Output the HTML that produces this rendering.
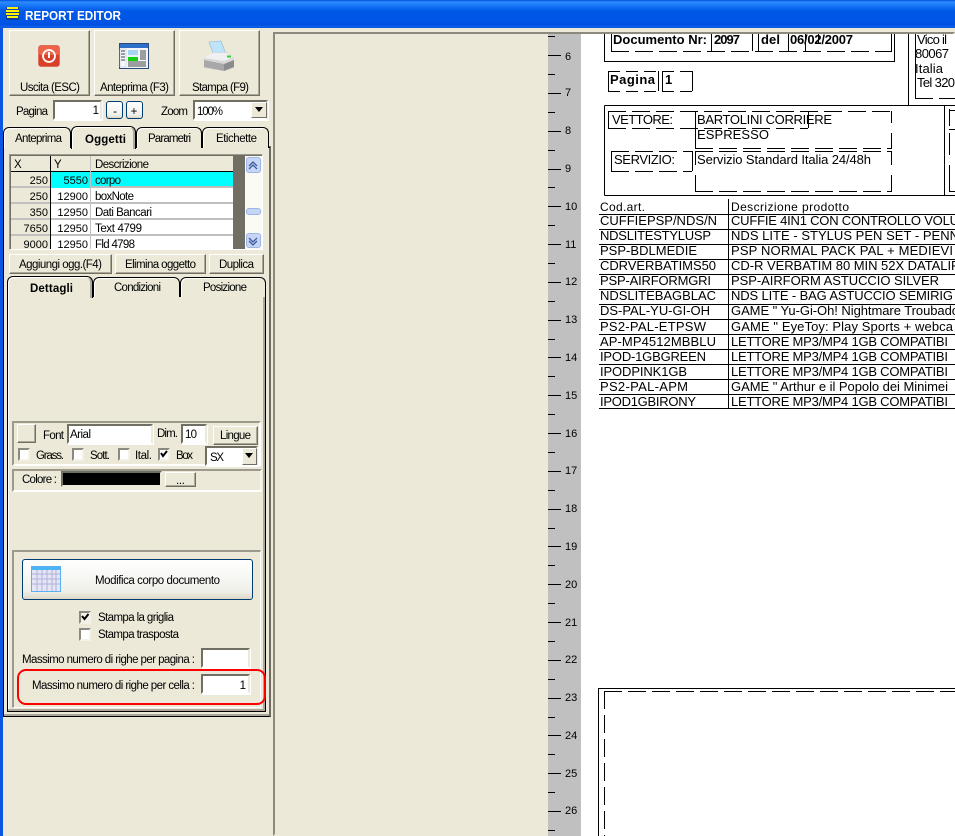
<!DOCTYPE html>
<html><head><meta charset="utf-8"><style>
html,body{margin:0;padding:0;width:955px;height:836px;overflow:hidden;background:#ECE9D8}
div{position:absolute;box-sizing:border-box}
.b{background:#ECE9D8;border:1px solid;border-color:#fff #716F64 #716F64 #fff;box-shadow:inset -1px -1px #ACA899}
.i{background:#fff;border:2px solid;border-color:#716F64 #ECE9D8 #fff #716F64;box-shadow:1px 1px #fff}
.x{background:linear-gradient(#fff,#F0F0EA 80%,#DCD8C8);border:1px solid #003C74;border-radius:3px}
.c{background:#fff;border:2px solid;border-color:#8C8A7E #F4F2E8 #F4F2E8 #8C8A7E;width:12px;height:13px}
.tab{background:#ECE9D8;border:1px solid #000;border-bottom:0;border-radius:6px 6px 0 0;box-shadow:inset 1px 1px #fff}
.g{border:2px solid;border-color:#9C9A8C #fff #fff #9C9A8C;background:#ECE9D8}
.dd{background:#ECE9D8;border:1px solid;border-color:#fff #716F64 #716F64 #fff}
.r{left:11px;width:222px;height:16px;background:#fff;border-bottom:2px solid #C0C0C0}
.h{left:11px;width:39px;height:16px;background:#ECE9D8;border-bottom:2px solid #C0C0C0}
text{font-family:"Liberation Sans",Arial,sans-serif;font-size:11.5px;fill:#000}
.n text{font-size:11px}
.d text{font-size:13px}
.bd{font-weight:bold}
</style></head><body>
<div style="left:0;top:0;width:955px;height:28px;background:linear-gradient(#0050DC 0,#2E8BFF 2px,#1A7BFA 5px,#0058E6 11px,#0055E5 22px,#0050E0 25px,#1466F0 27px,#0046C8 28px)"></div>
<div style="left:0;top:28px;width:3px;height:808px;background:#0A56E4"></div>

<!-- outer panel frame -->
<div style="left:3px;top:146px;width:268px;height:571px;background:#ECE9D8;border:1px solid #000;border-top:0;border-right:2px solid #6E6C60;box-shadow:inset 0 -2px #A8A698"></div>
<div style="left:3px;top:147px;width:267px;height:1px;background:#000"></div>

<!-- top buttons -->
<div class="b" style="left:9px;top:30px;width:81px;height:66px"></div>
<div class="b" style="left:94px;top:30px;width:81px;height:66px"></div>
<div class="b" style="left:179px;top:30px;width:81px;height:66px"></div>

<div class="i" style="left:53px;top:100px;width:49px;height:20px"></div>
<div class="x" style="left:106px;top:101px;width:17px;height:18px"></div>
<div class="x" style="left:126px;top:101px;width:17px;height:18px"></div>
<div class="i" style="left:193px;top:100px;width:75px;height:20px"></div>
<div class="dd" style="left:251px;top:102px;width:16px;height:16px"></div>

<!-- tabs 1 -->
<div class="tab" style="left:3px;top:127px;width:68px;height:21px"></div>
<div class="tab" style="left:136px;top:127px;width:66px;height:21px"></div>
<div class="tab" style="left:202px;top:127px;width:67px;height:21px"></div>
<div class="tab" style="left:71px;top:126px;width:65px;height:23px;border-color:#000;box-shadow:inset 1px 1px #fff,inset -2px 0 #ACA899"></div>

<!-- grid -->
<div style="left:9px;top:154px;width:254px;height:96px;background:#716F64;border:1px solid;border-color:#9C9A8C #fff #fff #9C9A8C"></div>
<div style="left:11px;top:156px;width:222px;height:16px;background:#ECE9D8;border-bottom:1px solid #000"></div>
<div class="r" style="top:172px;background:#0ff"></div><div class="h" style="top:172px"></div>
<div class="r" style="top:188px"></div><div class="h" style="top:188px"></div>
<div class="r" style="top:204px"></div><div class="h" style="top:204px"></div>
<div class="r" style="top:220px"></div><div class="h" style="top:220px"></div>
<div class="r" style="top:236px;height:13px;border:0"></div><div class="h" style="top:236px;height:13px;border:0"></div>
<div style="left:50px;top:156px;width:1px;height:93px;background:#000"></div>
<div style="left:51px;top:172px;width:39px;height:16px;background:#0ff"></div>
<div style="left:90px;top:156px;width:1px;height:93px;background:#C0C0C0"></div>
<div style="left:245px;top:156px;width:17px;height:93px;background:#FBFBF6"></div>
<div class="x" style="left:246px;top:157px;width:15px;height:16px;border-color:#9DB4E8;background:#C8D6F6"></div>
<div class="x" style="left:246px;top:208px;width:15px;height:7px;border-color:#9DB4E8;background:#C8D6F6"></div>
<div class="x" style="left:246px;top:233px;width:15px;height:15px;border-color:#9DB4E8;background:#C8D6F6"></div>

<div class="b" style="left:9px;top:254px;width:103px;height:20px"></div>
<div class="b" style="left:115px;top:254px;width:91px;height:20px"></div>
<div class="b" style="left:209px;top:254px;width:55px;height:20px"></div>

<!-- inner panel -->
<div style="left:7px;top:296px;width:259px;height:416px;background:#ECE9D8;border:1px solid #000;border-top:0;border-right:1px solid #000;box-shadow:inset -2px -2px #ACA899,inset 1px 0 #fff"></div>
<div style="left:7px;top:296px;width:259px;height:1px;background:#000"></div>
<div class="tab" style="left:93px;top:277px;width:87px;height:20px"></div>
<div class="tab" style="left:180px;top:277px;width:86px;height:20px"></div>
<div class="tab" style="left:7px;top:276px;width:86px;height:22px;box-shadow:inset 1px 1px #fff,inset -2px 0 #ACA899"></div>

<!-- font group -->
<div class="g" style="left:12px;top:421px;width:249px;height:45px"></div>
<div class="g" style="left:12px;top:469px;width:250px;height:23px;border-color:#9C9A8C #F8F6EC #fff #9C9A8C"></div>
<div class="b" style="left:17px;top:424px;width:19px;height:19px"></div>
<div class="i" style="left:67px;top:424px;width:86px;height:20px"></div>
<div class="i" style="left:181px;top:424px;width:26px;height:20px"></div>
<div class="b" style="left:213px;top:426px;width:45px;height:19px"></div>
<div class="c" style="left:18px;top:448px"></div>
<div class="c" style="left:72px;top:448px"></div>
<div class="c" style="left:118px;top:448px"></div>
<div class="c" style="left:158px;top:448px"></div>
<div class="i" style="left:205px;top:446px;width:53px;height:20px"></div>
<div class="dd" style="left:242px;top:448px;width:15px;height:17px"></div>
<div style="left:61px;top:471px;width:101px;height:16px;background:#000;border:2px solid;border-color:#716F64 #ECE9D8 #ECE9D8 #716F64"></div>
<div class="b" style="left:165px;top:472px;width:31px;height:15px"></div>

<!-- lower group -->
<div style="left:12px;top:550px;width:249px;height:158px;border-top:2px solid #9C9A8C;border-left:2px solid #9C9A8C;border-right:1px solid #fff;border-bottom:1px solid #fff"></div>
<div class="x" style="left:22px;top:559px;width:231px;height:41px"></div>
<div class="c" style="left:79px;top:611px;background:#F4F2E8"></div>
<div class="c" style="left:79px;top:628px;background:#fff"></div>
<div class="i" style="left:201px;top:648px;width:49px;height:20px"></div>
<div class="i" style="left:201px;top:674px;width:49px;height:20px"></div>
<div style="left:17px;top:669px;width:249px;height:36px;border:2px solid #F00;border-radius:9px"></div>

<!-- main -->
<div style="left:273px;top:32px;width:682px;height:804px;background:#ECE9D8;border:2px solid;border-color:#8C8A7E transparent transparent #8C8A7E"></div>
<div style="left:548px;top:34px;width:33px;height:802px;background:#C0C0C0"></div>
<div style="left:581px;top:34px;width:374px;height:802px;background:#fff"></div>

<!-- vector overlay -->
<svg width="955" height="836" viewBox="0 0 955 836" style="position:absolute;left:0;top:0">
<!-- title icon -->
<rect x="6" y="7" width="13" height="13" fill="#1A2A60" opacity=".55"/>
<g fill="#FFF200"><rect x="7" y="7" width="11" height="2"/><rect x="6" y="10" width="13" height="2"/><rect x="6" y="13" width="13" height="2"/><rect x="7" y="16" width="11" height="2"/></g>
<text x="25" y="20" textLength="96" lengthAdjust="spacingAndGlyphs" class="bd" style="font-size:13px;fill:#fff">REPORT EDITOR</text>

<!-- exit icon -->
<rect x="38" y="45" width="22" height="22" rx="3" fill="#D8402A" stroke="#F0E8E0" stroke-width=".6"/>
<rect x="39" y="46" width="20" height="9" rx="2" fill="#EE6448"/>
<circle cx="49" cy="56" r="6" fill="none" stroke="#fff" stroke-width="1.8"/>
<path d="M49 52v6" stroke="#fff" stroke-width="2"/>
<!-- preview icon -->
<rect x="119.500" y="43.500" width="29" height="25" fill="#F4F6FA" stroke="#2A4A7A"/>
<rect x="120" y="44" width="28" height="4" fill="#2F70C8"/>
<rect x="128" y="50" width="10" height="5" fill="#A8D4F4"/><rect x="128" y="55" width="10" height="2" fill="#E8F4FC"/>
<rect x="128" y="57" width="10" height="4" fill="#10D010"/>
<path d="M121 51h4M121 54h4M121 57h4M121 60h4M128 62h18M128 64h18M128 66h18M140 51h6M140 53h6M140 55h6M140 57h6M140 59h6" stroke="#444" stroke-width="1" shape-rendering="crispEdges"/>
<rect x="120" y="49" width="6" height="18" fill="none" stroke="#B8C4D8" stroke-width=".5"/>
<!-- printer icon -->
<path d="M209 42l12-1 5 13-12 2z" fill="#BEE4FA" stroke="#9AB8C8" stroke-width=".6"/>
<path d="M204 58l8-5 14-1 8 5v11l-10 3-20-3z" fill="#D8D8D8"/>
<path d="M204 58l20 3 10-4-8-4-14 0z" fill="#F0F0F0"/>
<path d="M204 60l20 4v7l-20-4z" fill="#A8A8A8"/>
<path d="M224 64l10-4v7l-10 4z" fill="#8C8C8C"/>
<rect x="227" y="55.500" width="4" height="2" fill="#30D030"/>

<!-- +/- dd arrows -->
<path d="M255 107h8l-4 5z"/><path d="M245 453h8l-4 5z"/>

<!-- calendar icon -->
<rect x="31.500" y="566.500" width="29" height="25" fill="#E4E6F6" stroke="#5AB0F0"/>
<rect x="32" y="567" width="28" height="3" fill="#4AB4F4"/>
<path d="M32 574h28M32 579h28M32 584h28M37 570v21M42 570v21M47 570v21M52 570v21M56 570v21" stroke="#B0B2D8" shape-rendering="crispEdges"/>

<!-- checks -->
<path d="M161 453l2 3 4-5" fill="none" stroke="#000" stroke-width="2"/>
<path d="M82 616l2.500 3 4-5" fill="none" stroke="#000" stroke-width="2"/>

<!-- labels -->
<text x="20" y="91" textLength="60">Uscita (ESC)</text>
<text x="100" y="91" textLength="69">Anteprima (F3)</text>
<text x="192" y="91" textLength="57">Stampa (F9)</text>
<text x="16" y="115" textLength="32">Pagina</text>
<text x="99" y="114" text-anchor="end">1</text>
<text x="115" y="115" text-anchor="middle">-</text>
<text x="134" y="115" text-anchor="middle">+</text>
<text x="161" y="115" textLength="27">Zoom</text>
<text x="197" y="115" textLength="26">100%</text>
<text x="15" y="142" textLength="47">Anteprima</text>
<text x="85" y="143" textLength="41" class="bd">Oggetti</text>
<text x="148" y="142" textLength="43">Parametri</text>
<text x="216" y="142" textLength="41">Etichette</text>
<text x="14" y="168">X</text><text x="54" y="168">Y</text><text x="95" y="168" textLength="54">Descrizione</text>
<g text-anchor="end" class="n"><text x="48" y="184">250</text><text x="48" y="200">250</text><text x="48" y="216">350</text><text x="48" y="232">7650</text><text x="48" y="248">9000</text>
<text x="88" y="184">5550</text><text x="88" y="200">12900</text><text x="88" y="216">12950</text><text x="88" y="232">12950</text><text x="88" y="248">12950</text></g>
<text x="95" y="184" textLength="26">corpo</text><text x="95" y="200" textLength="39">boxNote</text><text x="95" y="216" textLength="57">Dati Bancari</text><text x="95" y="232" textLength="47">Text 4799</text><text x="95" y="248" textLength="40">Fld 4798</text>
<path d="M249 166l4-4 4 4M249 169l4-4 4 4M249 238l4 4 4-4M249 241l4 4 4-4" fill="none" stroke="#3A5A9A" stroke-width="1.3"/>
<text x="19" y="268" textLength="83">Aggiungi ogg.(F4)</text>
<text x="125" y="268" textLength="71">Elimina oggetto</text>
<text x="219" y="268" textLength="35">Duplica</text>
<text x="30" y="292" textLength="43" class="bd">Dettagli</text>
<text x="114" y="291" textLength="47">Condizioni</text>
<text x="203" y="291" textLength="44">Posizione</text>
<text x="43" y="439" textLength="21">Font</text>
<text x="70" y="438" textLength="21">Arial</text>
<text x="157" y="437" textLength="21">Dim.</text>
<text x="185" y="438" textLength="12">10</text>
<text x="220" y="439" textLength="31">Lingue</text>
<text x="36" y="459" textLength="28">Grass.</text>
<text x="90" y="459" textLength="20">Sott.</text>
<text x="135" y="459" textLength="17">Ital.</text>
<text x="176" y="459" textLength="17">Box</text>
<text x="210" y="461" textLength="14">SX</text>
<text x="22" y="483" textLength="35">Colore :</text>
<text x="176" y="484" textLength="9">...</text>
<text x="95" y="584" textLength="125">Modifica corpo documento</text>
<text x="98" y="621" textLength="76">Stampa la griglia</text>
<text x="98" y="638" textLength="81">Stampa trasposta</text>
<text x="22" y="663" textLength="173">Massimo numero di righe per pagina :</text>
<text x="32" y="689" textLength="163">Massimo numero di righe per cella :</text>
<text x="246" y="689" text-anchor="end">1</text>

<!-- ruler -->
<g fill="#000" shape-rendering="crispEdges">
<path stroke="#000" d="M548 36.500h7M548 55.500h13M548 74.500h7M548 93.500h13M548 112.500h7M548 131.500h13M548 150.500h7M548 169.500h13M548 187.500h7M548 206.500h13M548 225.500h7M548 244.500h13M548 263.500h7M548 282.500h13M548 301.500h7M548 320.500h13M548 339.500h7M548 357.500h13M548 376.500h7M548 395.500h13M548 414.500h7M548 433.500h13M548 452.500h7M548 471.500h13M548 490.500h7M548 509.500h13M548 528.500h7M548 546.500h13M548 565.500h7M548 584.500h13M548 603.500h7M548 622.500h13M548 641.500h7M548 660.500h13M548 679.500h7M548 698.500h13M548 717.500h7M548 735.500h13M548 754.500h7M548 773.500h13M548 792.500h7M548 811.500h13M548 830.500h7"/>
</g>
<g text-anchor="start" class="n">
<text x="565" y="60">6</text><text x="565" y="96">7</text><text x="565" y="134">8</text><text x="565" y="172">9</text>
<text x="565" y="210">10</text><text x="565" y="248">11</text><text x="565" y="285">12</text><text x="565" y="323">13</text><text x="565" y="361">14</text><text x="565" y="399">15</text><text x="565" y="437">16</text><text x="565" y="474">17</text><text x="565" y="512">18</text><text x="565" y="550">19</text><text x="565" y="588">20</text><text x="565" y="626">21</text><text x="565" y="663">22</text><text x="565" y="701">23</text><text x="565" y="739">24</text><text x="565" y="777">25</text><text x="565" y="814">26</text>
</g>

<!-- document lines -->
<g fill="none" stroke="#000" shape-rendering="crispEdges">
<path d="M604.500 34v27.500H894.500V34M908.500 34v71M604.500 105.500H955M604.500 105.500v90M604.500 195.500H955M944.500 105v90"/>
<path d="M611.500 34v17M711.500 34v17M752.500 34v17M758.500 34v17M788.500 34v17M805.500 34v17M818.500 34v10M891.500 34v17"/>
<path stroke-dasharray="18 6" d="M611 51.500H892"/>
<path d="M915.500 34v64"/><path stroke-dasharray="18 6" d="M915 98.500H955"/>
<path stroke-dasharray="12 6" d="M608 71.500H658M608 91.500H658M662 71.500H692M662 91.500H692"/>
<path d="M608.500 71v20M658.500 71v20M662.500 71v20M692.500 71v20"/>
<path d="M608.500 111v17M695.500 111v17M808.500 111v17M695.500 128v20M611.500 151v20M692.500 151v20M695.500 151v14M695.500 175v16M891.500 111v12M891.500 133v15M891.500 151v14M891.500 175v16"/>
<path stroke-dasharray="18 6" d="M608 111.500H892M608 128.500H808M695 148.500H892M611 151.500H692M611 171.500H692M695 151.500H892M695 191.500H892"/>
<path d="M949.500 109v17M949.500 133v22M949.500 165v26"/><path stroke-dasharray="12 6" d="M949 110.500H955M949 129.500H955M949 191.500H955"/>
<path d="M728.500 199v210"/>
<path d="M599 214.500H955M599 229.500H955M599 244.500H955M599 259.500H955M599 274.500H955M599 289.500H955M599 304.500H955M599 319.500H955M599 334.500H955M599 349.500H955M599 364.500H955M599 379.500H955M599 394.500H955M599 408.500H955"/>
<path d="M598.500 836V688.500H955"/>
<path stroke-dasharray="18 6" d="M604 691.500H955"/>
<path stroke-dasharray="18 6" d="M604.500 691V836"/>
</g>

<g class="d">
<text x="613" y="44" textLength="94" class="bd">Documento Nr:</text>
<text x="714" y="44" textLength="26" class="bd">2097</text>
<text x="761" y="44" textLength="19" class="bd">del</text>
<text x="790" y="44" textLength="63" class="bd">06/02/2007</text>
<text x="610" y="84" textLength="45" class="bd">Pagina</text>
<text x="665" y="84" class="bd">1</text>
<text x="917" y="44" textLength="30">Vico il</text>
<text x="915" y="58" textLength="34">80067</text>
<text x="915" y="73" textLength="28">Italia</text>
<text x="917" y="87" textLength="38">Tel 320</text>
<text x="612" y="124" textLength="61">VETTORE:</text>
<text x="697" y="124" textLength="135">BARTOLINI CORRIERE</text>
<text x="697" y="139" textLength="72">ESPRESSO</text>
<text x="614" y="164" textLength="61">SERVIZIO:</text>
<text x="697" y="164" textLength="174">Servizio Standard Italia 24/48h</text>
<text x="600" y="211" textLength="45" style="font-size:12px">Cod.art.</text>
<text x="731" y="211" textLength="118" style="font-size:12px">Descrizione prodotto</text>
<text x="600" y="225" textLength="117">CUFFIEPSP/NDS/N</text>
<text x="600" y="240" textLength="111">NDSLITESTYLUSP</text>
<text x="600" y="255" textLength="97">PSP-BDLMEDIE</text>
<text x="600" y="270" textLength="116">CDRVERBATIMS50</text>
<text x="600" y="285" textLength="111">PSP-AIRFORMGRI</text>
<text x="600" y="300" textLength="116">NDSLITEBAGBLAC</text>
<text x="600" y="315" textLength="110">DS-PAL-YU-GI-OH</text>
<text x="600" y="331" textLength="106">PS2-PAL-ETPSW</text>
<text x="600" y="346" textLength="116">AP-MP4512MBBLU</text>
<text x="600" y="361" textLength="106">IPOD-1GBGREEN</text>
<text x="600" y="376" textLength="87">IPODPINK1GB</text>
<text x="600" y="391" textLength="88">PS2-PAL-APM</text>
<text x="600" y="406" textLength="96">IPOD1GBIRONY</text>
<text x="731" y="225" textLength="228">CUFFIE 4IN1 CON CONTROLLO VOLU</text>
<text x="731" y="240" textLength="228">NDS LITE - STYLUS PEN SET - PENN</text>
<text x="731" y="255" textLength="222">PSP NORMAL PACK PAL + MEDIEVI</text>
<text x="731" y="270" textLength="228">CD-R VERBATIM 80 MIN 52X DATALIF</text>
<text x="731" y="285" textLength="208">PSP-AIRFORM ASTUCCIO SILVER</text>
<text x="731" y="300" textLength="222">NDS LITE - BAG ASTUCCIO SEMIRIG</text>
<text x="731" y="315" textLength="228">GAME " Yu-Gi-Oh! Nightmare Troubado</text>
<text x="731" y="331" textLength="222">GAME " EyeToy: Play Sports + webca</text>
<text x="731" y="346" textLength="217">LETTORE MP3/MP4 1GB COMPATIBI</text>
<text x="731" y="361" textLength="217">LETTORE MP3/MP4 1GB COMPATIBI</text>
<text x="731" y="376" textLength="217">LETTORE MP3/MP4 1GB COMPATIBI</text>
<text x="731" y="391" textLength="217">GAME " Arthur e il Popolo dei Minimei</text>
<text x="731" y="406" textLength="217">LETTORE MP3/MP4 1GB COMPATIBI</text>
</g>
</svg>
</body></html>
